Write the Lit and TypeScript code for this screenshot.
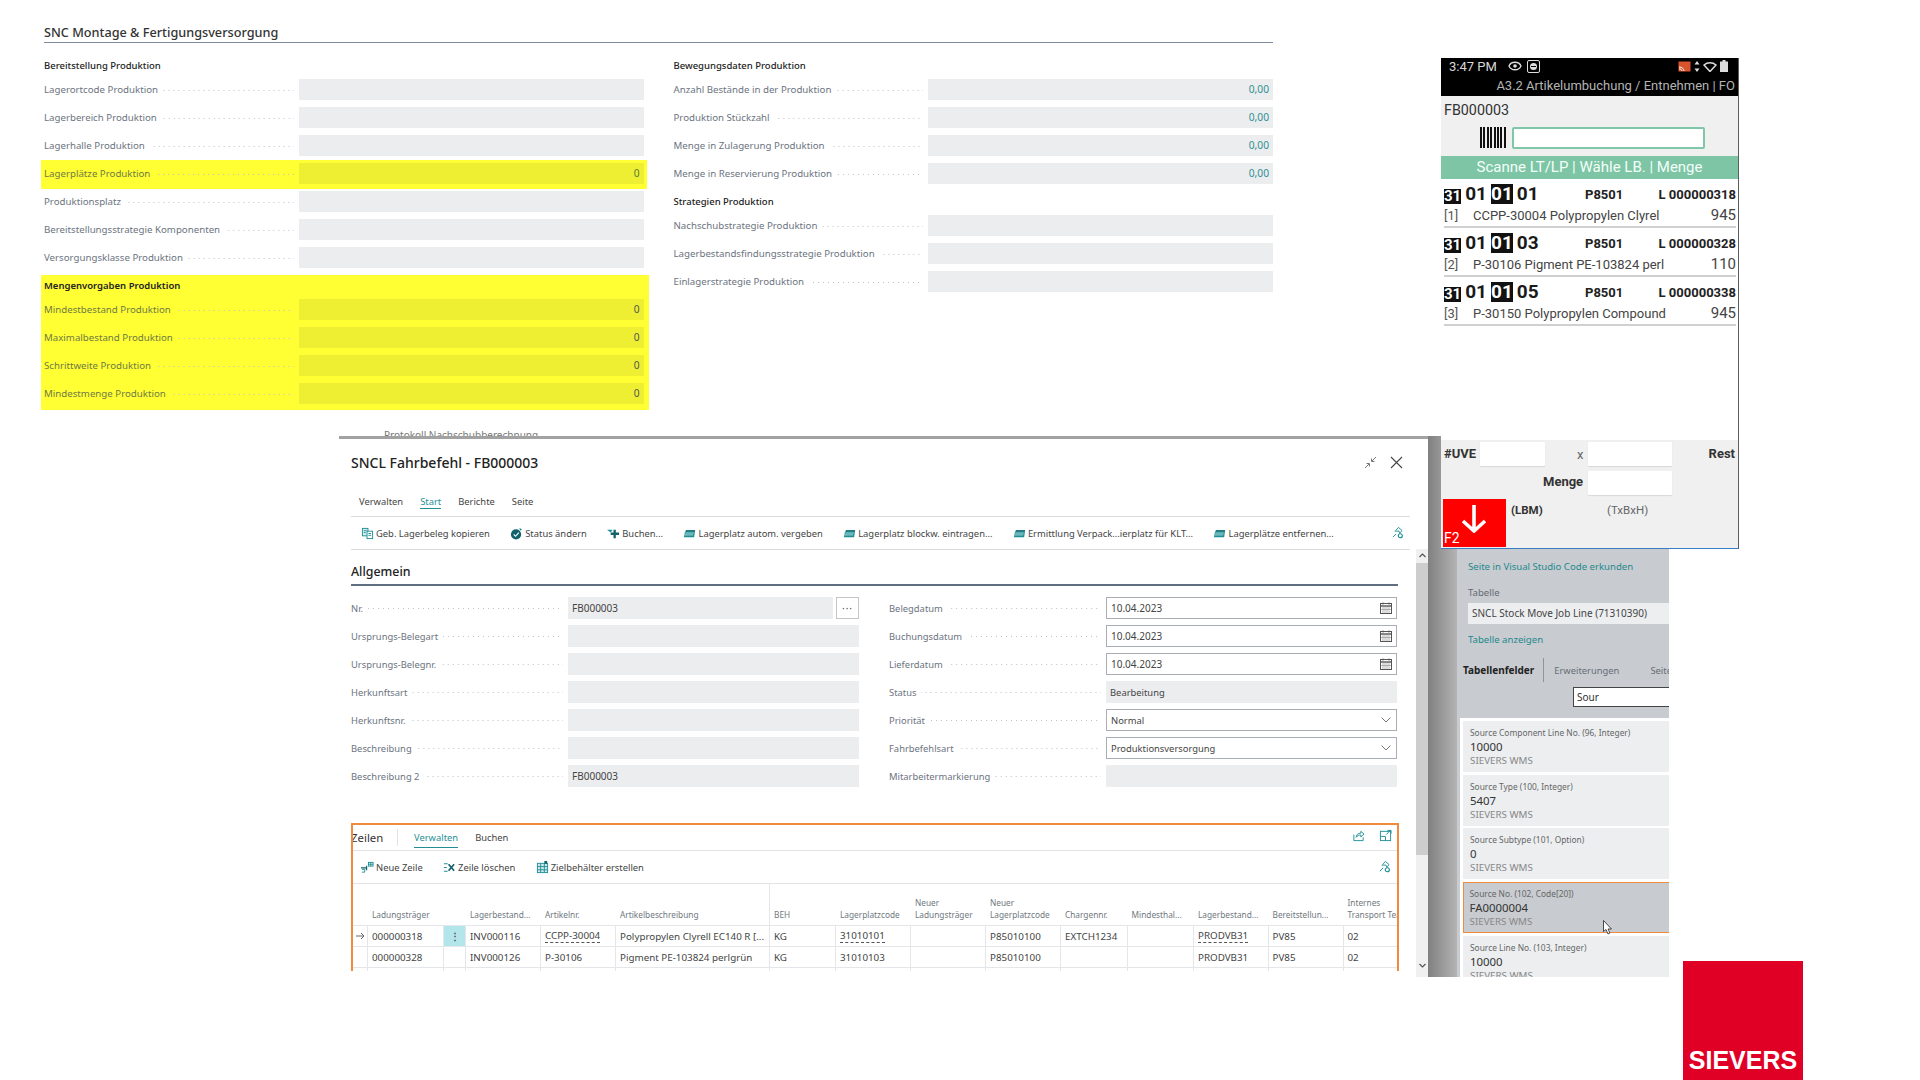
import { LitElement, css, html, svg } from "lit";
import { customElement } from "lit/decorators.js";

const TEAL = "#1f8f95";

// small icon set, all drawn on a 14x14 box
const icons = {
  copy: svg`<rect x="1.5" y="1.5" width="6" height="8" fill="#d6eef0" stroke="${TEAL}"/><rect x="6.5" y="4.5" width="6" height="8" fill="#fff" stroke="${TEAL}"/><path d="M8 7h3M8 9h3M3 4h3M3 6h2" stroke="${TEAL}"/>`,
  status: svg`<circle cx="6.5" cy="8" r="5.5" fill="#12626b"/><path d="M4 8l2 2 3.5-4" fill="none" stroke="#fff" stroke-width="1.2"/><path d="M10 1l3 1.5L11 4z" fill="${TEAL}"/>`,
  post: svg`<path d="M7 3h2.5v3H13v2.5H9.500V12H7V8.500H4V6h3z" fill="#12626b"/><path d="M0 3h6l-2 3z" fill="${TEAL}"/>`,
  bin: svg`<path d="M3 4h10l-1 7H1l1-5z" fill="#1f8f95"/><path d="M2.500 6.500h9M2 8.500h9" stroke="#d6eef0" stroke-width=".8"/><path d="M3 4h10" stroke="#12626b" stroke-width="1.2"/>`,
  pin: svg`<path d="M2 12l3.500-3.500M5 5l3-3.500 4 3.500-3 3" fill="none" stroke="${TEAL}" stroke-width="1"/><path d="M4 5.500h4.500l1 2.500" fill="none" stroke="${TEAL}"/><circle cx="10" cy="10.500" r="2.200" fill="#fff" stroke="${TEAL}" stroke-width="1.200"/>`,
  newline: svg`<path d="M1 9h3v3H1" fill="none" stroke="${TEAL}"/><path d="M0 7.500h6M6 5v5" fill="none" stroke="#12626b" stroke-width="1.300"/><rect x="8" y="1.500" width="5" height="4" fill="none" stroke="${TEAL}"/><path d="M10.500 1.500v4M8 3.500h5" stroke="${TEAL}"/>`,
  delline: svg`<path d="M1 3h4M1 7h3M1 11h4" stroke="${TEAL}" stroke-width="1.200"/><path d="M6 3.500l6 7M12 3.500l-6 7" stroke="#12626b" stroke-width="1.800"/>`,
  bincreate: svg`<rect x="1.500" y="2.500" width="11" height="10" fill="#cfeaec" stroke="${TEAL}"/><path d="M1.500 6h11M1.500 9.500h11M5 2.500v10M9 2.500v10" stroke="${TEAL}"/><path d="M9 0h3v3H9z" fill="#12626b"/>`,
  share: svg`<path d="M2 6v6.500h10V9" fill="none" stroke="${TEAL}"/><path d="M4.500 9c0-3 2-4.500 5-4.500V2.500L13 5.500 9.500 8.500V6.500c-2 0-4 .500-5 2.500z" fill="#fff" stroke="${TEAL}"/>`,
  expand: svg`<rect x="1.500" y="2.500" width="11" height="10" fill="none" stroke="${TEAL}"/><path d="M1.500 8H7v4.500M8 6l4-4.500M9 1.500h4v3.500" fill="none" stroke="${TEAL}"/>`,
};

const icon = (name: keyof typeof icons) =>
  html`<svg class="ico" viewBox="0 0 14 14">${icons[name]}</svg>`;

const calendar = html`<svg class="cal" viewBox="0 0 12 12">
  <rect x=".5" y="1.500" width="11" height="10" fill="none" stroke="#555"/>
  <path d="M.5 4h11" stroke="#555" stroke-width="1.400"/>
  <path d="M3 5v6M5 5v6M7 5v6M9 5v6M1 7.500h10" stroke="#999" stroke-width=".7"/>
  <path d="M3 .5v2M9 .5v2" stroke="#555"/>
</svg>`;

const chevron = html`<svg class="chev" viewBox="0 0 10 6">
  <path d="M.5 .5L5 5 9.500 .5" fill="none" stroke="#777"/>
</svg>`;

const rowArrow = html`<svg width="9" height="8" viewBox="0 0 9 8">
  <path d="M0 4h8M5 1l3 3-3 3" fill="none" stroke="#666"/>
</svg>`;

type Field = { label: string; value?: string; kind?: string };

const supplyFields: Field[] = [
  { label: "Lagerortcode Produktion" },
  { label: "Lagerbereich Produktion" },
  { label: "Lagerhalle Produktion" },
  { label: "Lagerplätze Produktion", value: "0", kind: "hot" },
  { label: "Produktionsplatz" },
  { label: "Bereitstellungsstrategie Komponenten" },
  { label: "Versorgungsklasse Produktion" },
];
const amountFields: Field[] = [
  { label: "Mindestbestand Produktion", value: "0" },
  { label: "Maximalbestand Produktion", value: "0" },
  { label: "Schrittweite Produktion", value: "0" },
  { label: "Mindestmenge Produktion", value: "0" },
];
const movementFields: Field[] = [
  { label: "Anzahl Bestände in der Produktion", value: "0,00" },
  { label: "Produktion Stückzahl", value: "0,00" },
  { label: "Menge in Zulagerung Produktion", value: "0,00" },
  { label: "Menge in Reservierung Produktion", value: "0,00" },
];
const strategyFields: Field[] = [
  { label: "Nachschubstrategie Produktion" },
  { label: "Lagerbestandsfindungsstrategie Produktion" },
  { label: "Einlagerstrategie Produktion" },
];

const actions: [keyof typeof icons, string][] = [
  ["copy", "Geb. Lagerbeleg kopieren"],
  ["status", "Status ändern"],
  ["post", "Buchen..."],
  ["bin", "Lagerplatz autom. vergeben"],
  ["bin", "Lagerplatz blockw. eintragen..."],
  ["bin", "Ermittlung Verpack...ierplatz für KLT..."],
  ["bin", "Lagerplätze entfernen..."],
];

const generalLeft: Field[] = [
  { label: "Nr.", value: "FB000003", kind: "lookup" },
  { label: "Ursprungs-Belegart" },
  { label: "Ursprungs-Belegnr." },
  { label: "Herkunftsart" },
  { label: "Herkunftsnr." },
  { label: "Beschreibung" },
  { label: "Beschreibung 2", value: "FB000003" },
];
const generalRight: Field[] = [
  { label: "Belegdatum", value: "10.04.2023", kind: "date" },
  { label: "Buchungsdatum", value: "10.04.2023", kind: "date" },
  { label: "Lieferdatum", value: "10.04.2023", kind: "date" },
  { label: "Status", value: "Bearbeitung" },
  { label: "Priorität", value: "Normal", kind: "select" },
  { label: "Fahrbefehlsart", value: "Produktionsversorgung", kind: "select" },
  { label: "Mitarbeitermarkierung" },
];

const columns = [
  "",
  "Ladungsträger",
  "",
  "Lagerbestand...",
  "Artikelnr.",
  "Artikelbeschreibung",
  "BEH",
  "Lagerplatzcode",
  "Neuer\nLadungsträger",
  "Neuer\nLagerplatzcode",
  "Chargennr.",
  "Mindesthal...",
  "Lagerbestand...",
  "Bereitstellun...",
  "Internes\nTransport Tea",
];
const lines = [
  ["", "000000318", "⋮", "INV000116", "CCPP-30004", "Polypropylen Clyrell EC140 R [...", "KG", "31010101", "", "P85010100", "EXTCH1234", "", "PRODVB31", "PV85", "02"],
  ["", "000000328", "", "INV000126", "P-30106", "Pigment PE-103824 perlgrün", "KG", "31010103", "", "P85010100", "", "", "PRODVB31", "PV85", "02"],
  ["", "", "", "", "", "", "", "", "", "", "", "", "", "", ""],
];
const linked = new Set(["CCPP-30004", "31010101", "PRODVB31"]);

const scans = [
  { end: "01", lot: "L 000000318", idx: "[1]", text: "CCPP-30004 Polypropylen Clyrel", qty: "945" },
  { end: "03", lot: "L 000000328", idx: "[2]", text: "P-30106 Pigment PE-103824 perl", qty: "110" },
  { end: "05", lot: "L 000000338", idx: "[3]", text: "P-30150 Polypropylen Compound", qty: "945" },
];

const inspectCards = [
  ["Source Component Line No. (96, Integer)", "10000"],
  ["Source Type (100, Integer)", "5407"],
  ["Source Subtype (101, Option)", "0"],
  ["Source No. (102, Code[20])", "FA0000004"],
  ["Source Line No. (103, Integer)", "10000"],
];

@customElement("app-root")
export class AppRoot extends LitElement {
  static styles = css`
    :host {
      display: block;
      position: relative;
      width: 1920px;
      height: 1080px;
      overflow: hidden;
      background: #fff;
      font-family: "Noto Sans", "Open Sans", sans-serif;
      font-size: 10px;
      color: #333;
    }

    /* the page is a slide: every window sits at its own place on it */
    .card-sheet { position: absolute; left: 44px; top: 22px; width: 1229px; }
    .behind { position: absolute; left: 384px; top: 431px; height: 5px; overflow: hidden; font-size: 10px; line-height: 8px; color: #777; white-space: nowrap; }
    .dialog { position: absolute; left: 339px; top: 436px; width: 1089px; height: 541px; }
    .shade { position: absolute; left: 1428px; top: 436px; width: 29px; height: 541px; background: linear-gradient(90deg, #808080, #b4b4b4); }
    .phone { position: absolute; left: 1441px; top: 58px; width: 298px; height: 491px; }
    .inspector { position: absolute; left: 1457px; top: 548px; width: 212px; height: 429px; }
    .logo { position: absolute; left: 1683px; top: 961px; width: 120px; height: 119px; }

    /* top sheet */
    .sheet-title { font-size: 12.700px; line-height: 20px; color: #333; font-weight: 500; height: 20px; border-bottom: 1.500px solid #7d8b9c; }
    .sheet-cols { display: grid; grid-template-columns: 600px 600px; column-gap: 29.500px; margin-top: 13px; }
    .sub { font-size: 9.500px; font-weight: 500; color: #222; height: 22.500px; line-height: 20px; }
    .sub.mid { height: 24px; line-height: 22px; }
    .frow { display: flex; height: 28px; align-items: flex-start; }
    .flabel { display: flex; align-items: center; height: 22px; color: #6c7480; font-size: 9.700px; white-space: nowrap; }
    .leader { flex: 1; min-width: 0; height: 1px; margin: 1px 5px 0 5px; background: linear-gradient(90deg, #bcc0c6 1px, transparent 1px) right / 5px 1px repeat-x; }
    .fbar { height: 21.500px; background: #ecedef; display: flex; align-items: center; justify-content: flex-end; padding: 0 4px; box-sizing: border-box; font-size: 10.200px; color: #444; flex: none; }

    .col-a .flabel { width: 254.500px; }
    .col-a .fbar { width: 345px; }
    .col-b .flabel { width: 254.500px; }
    .col-b .fbar { width: 345px; color: #2e8f93; }

    .hl { background: #ffff33; margin-left: -3px; padding-left: 3px; }
    .hl .fbar { background: #eeee33; color: #5c7a3a; }
    .hl .flabel { color: #6f7a45; }
    .hl-one { height: 29px; box-sizing: border-box; padding-top: 3px; margin-top: -3px; margin-bottom: 2px; margin-right: -3px; }
    .hl-block { height: 135px; margin-right: -5px; box-sizing: border-box; }
    .hl-block .sub { height: 24px; line-height: 22px; font-weight: 600; color: #222; }
    .hl-block .fbar { color: #555; }

    /* dialog */
    .dialog { background: #fff; display: flex; flex-direction: column; }
    .dialog-strip { height: 3px; background: #a2a2a2; flex: none; }
    .dialog-body { position: relative; flex: 1; padding: 0 30px 0 12px; }
    .dlg-head { display: flex; align-items: center; justify-content: space-between; height: 47px; margin-right: -5px; }
    .dlg-title { font-size: 14px; font-weight: 500; color: #222; }
    .dlg-tools { display: flex; gap: 13px; align-items: center; }
    .tabs { display: flex; height: 31px; gap: 17px; padding-left: 8px; margin-right: -12px; align-items: flex-start; border-bottom: 1px solid #dcdcdc; box-sizing: border-box; }
    .tab { font-size: 9.400px; line-height: 18px; height: 23px; color: #444; box-sizing: border-box; padding-top: 7px; }
    .tab.on { color: #1f8f95; border-bottom: 1.500px solid #1f8f95; }
    .actions { display: flex; align-items: center; height: 32px; padding-left: 10px; margin-right: -12px; border-bottom: 1px solid #dcdcdc; position: relative; }
    .action { display: flex; align-items: center; gap: 2px; margin-right: 20.400px; font-size: 9.400px; color: #444; white-space: nowrap; }
    .ico { width: 13px; height: 13px; flex: none; }
    .pin { position: absolute; right: 6px; top: 9px; }
    .fasttab { font-size: 12.400px; font-weight: 500; color: #222; height: 34px; line-height: 44px; border-bottom: 2px solid #5f6f7f; }
    .general { display: grid; grid-template-columns: 508px 508px; column-gap: 30px; margin-top: 11px; }
    .general .flabel { width: 217px; font-size: 9.400px; }
    .gbar { flex: 1; height: 22px; background: #ecedef; display: flex; align-items: center; padding: 0 4px; box-sizing: border-box; font-size: 9.400px; color: #444; }
    .gbar.digits { font-size: 10px; }
    .gbar.input { background: #fff; border: 1px solid #a9adb5; }
    .gbar.input > svg { margin-left: auto; }
    .cal { width: 12px; height: 12px; }
    .chev { width: 10px; height: 6px; margin-right: 1px; }
    .gbar.lookup { margin-right: 3px; }
    .more { width: 23px; height: 22px; border: 1px solid #c3c5c9; box-sizing: border-box; display: flex; align-items: center; justify-content: center; color: #555; font-size: 10px; letter-spacing: 1px; flex: none; }

    .parts { position: absolute; left: 12px; top: 384px; width: 1048px; height: 148px; box-sizing: border-box; border: solid #f08a3c; border-width: 2px 2px 0 2px; overflow: hidden; background: #fff; }
    .parts-head { display: flex; align-items: center; height: 25px; border-bottom: 1px solid #e2e3e6; position: relative; }
    .parts-title { font-size: 11.400px; color: #333; width: 47px; border-right: 1px solid #e2e3e6; height: 17px; line-height: 17px; margin-right: 16px; flex: none; margin-left: -2px; box-sizing: border-box; }
    .ptab { font-size: 9.400px; margin-right: 17px; color: #444; height: 20px; line-height: 18px; padding-top: 1px; box-sizing: border-box; }
    .ptab.on { color: #1f8f95; border-bottom: 1.500px solid #1f8f95; }
    .ptools { position: absolute; right: 5px; top: 4px; display: flex; gap: 14px; }
    .parts-actions { display: flex; align-items: center; height: 32px; padding-left: 8px; border-bottom: 1px solid #e2e3e6; position: relative; }
    .grid { display: grid; grid-template-columns: 15px 76px 22px 75px 75px 154px 66px 75px 75px 75px 66.500px 66.500px 74.500px 75px 56px; border-bottom: 1px solid #dcdfe3; height: 88px; grid-template-rows: 42px 21px 21px 4px; }
    .th { display: flex; align-items: flex-end; padding: 0 0 4px 4px; font-size: 8.300px; color: #707880; line-height: 12px; box-sizing: border-box; white-space: pre; overflow: hidden; border-bottom: 1px solid #e4e6ea; }
    .th.split { border-right: 1px solid #e4e6ea; }
    .td { display: flex; align-items: center; padding-left: 4px; font-size: 9.800px; color: #444; white-space: nowrap; overflow: hidden; box-sizing: border-box; border-right: 1px solid #e4e6ea; border-bottom: 1px solid #e4e6ea; }
    .td.mark { padding: 0; justify-content: center; }
    .td.menu { padding: 0; justify-content: center; font-weight: 700; color: #555; }
    .td.menu.on { background: #b3e6ea; }
    .td .link { border-bottom: 1px dashed #555; line-height: 12px; }

    .scroll { position: absolute; right: 0; top: 110px; bottom: 0; width: 12px; background: #f0f0f0; display: flex; flex-direction: column; }
    .scroll-up, .scroll-down { flex: none; display: flex; justify-content: center; padding-top: 4px; box-sizing: border-box; }
    .scroll-up { height: 14px; }
    .scroll-down { height: 24px; padding-top: 10px; }
    .thumb { height: 292px; background: #cdcdcd; flex: none; }
    .scroll .spacer { flex: 1; }

    /* phone */
    .phone { background: #fff; font-family: Roboto, "Liberation Sans", sans-serif; display: flex; flex-direction: column; border-right: 1px solid #5e5e5e; border-bottom: 1px solid #3b7dc4; box-sizing: border-box; }
    .ph-status { background: #000; height: 38px; flex: none; position: relative; color: #ddd; }
    .ph-time { position: absolute; left: 8px; top: 0; font-size: 13px; line-height: 17px; color: #d8d8d8; }
    .ph-eye { position: absolute; left: 67px; top: 3px; }
    .ph-sync { position: absolute; left: 86px; top: 2px; width: 13px; height: 13px; }
    .ph-right { position: absolute; right: 10px; top: 2px; display: flex; gap: 3px; align-items: center; }
    .ph-title { position: absolute; right: 3px; top: 19px; font-size: 13px; line-height: 17px; color: #b4b4b4; white-space: nowrap; }
    .ph-scan { background: #f0f0f0; height: 60px; flex: none; position: relative; }
    .ph-doc { position: absolute; left: 3px; top: 5px; font-size: 14.300px; line-height: 18px; color: #333; }
    .ph-bars { position: absolute; left: 39px; top: 31px; width: 27px; height: 21px; background: repeating-linear-gradient(90deg, #111 0 2px, transparent 2px 3.400px); }
    .ph-input { position: absolute; left: 71px; top: 31px; width: 193px; height: 22px; box-sizing: border-box; border: 2px solid #80c6a8; border-radius: 2px; background: #fff; }
    .ph-band { background: #7dc5a5; color: #f4fff9; height: 23px; line-height: 23px; flex: none; font-size: 15px; text-align: center; }
    .ph-list { flex: 1; padding: 0 2px 0 3px; }
    .ph-item { height: 49px; box-sizing: border-box; border-bottom: 2px solid #d0d0d0; position: relative; }
    .ph-line { position: absolute; left: 0; right: 0; top: 3px; height: 24px; display: flex; align-items: center; color: #222; }
    .bin { font-size: 19px; font-weight: 700; color: #1a1a1a; margin-right: 4px; line-height: 20px; }
    .bin.inv { background: #111; color: #fff; line-height: 20px; }
    .bin.inv.small { font-size: 15px; line-height: 15px; height: 15px; margin-top: 4px; }
    .bin.inv.big { height: 20px; }
    .zone { position: absolute; left: 141px; font-size: 13px; font-weight: 700; color: #222; }
    .lot { position: absolute; right: 0; font-size: 13px; font-weight: 700; color: #222; }
    .ph-desc { position: absolute; left: 0; right: 0; top: 27px; height: 18px; display: flex; align-items: center; color: #444; font-size: 13px; }
    .ph-idx { width: 29px; color: #555; }
    .ph-qty { margin-left: auto; font-size: 15px; color: #444; }
    .ph-foot { background: #f0f0f0; height: 108px; flex: none; position: relative; margin-top: auto; font-size: 13px; }
    .pf { position: absolute; }
    .pf-x { left: 136px; top: 7px; color: #666; }
    .pf-input { position: absolute; background: #fff; height: 24px; box-shadow: 0 1px 1px #d8d8d8; border-radius: 1px; top: 2px; }
    .pf-uve { left: 39px; width: 65px; }
    .pf-mult { left: 147px; width: 84px; }
    .pf-qty { left: 147px; width: 84px; top: 31px; }
    .pf-b { font-weight: 700; color: #333; line-height: 16px; }
    .pf-l1 { left: 3px; top: 6px; }
    .pf-l2 { right: 3px; top: 6px; }
    .pf-l3 { left: 102px; top: 34px; }
    .pf-l4 { left: 70px; top: 62px; font-size: 11.500px; }
    .pf-l5 { left: 166px; top: 62px; font-size: 11.500px; line-height: 16px; color: #666; }
    .pf-red { position: absolute; left: 2px; top: 59px; width: 63px; height: 48px; background: #f00; }
    .pf-red svg { position: absolute; left: 17px; top: 5px; }
    .pf-f2 { position: absolute; left: 1px; bottom: 1px; font-size: 14px; line-height: 16px; color: #fff; }

    /* inspector */
    .inspector { background: #c8ccd0; overflow: hidden; font-size: 10px; color: #444; }
    .insp-link { color: #23888e; position: absolute; left: 11px; white-space: nowrap; line-height: 14px; font-size: 9.600px; }
    .insp-link.one { top: 12px; }
    .insp-link.two { top: 85px; }
    .insp-cap { position: absolute; left: 11px; top: 38px; color: #656a74; line-height: 14px; font-size: 9.600px; }
    .insp-val { position: absolute; left: 11px; top: 55px; right: 0; height: 21px; background: #eceef0; padding-left: 4px; line-height: 21px; color: #444; white-space: nowrap; }
    .insp-tabs { position: absolute; left: 6px; top: 110px; right: 0; height: 24px; display: flex; align-items: center; white-space: nowrap; color: #666d76; font-size: 9.400px; }
    .insp-tabs b { color: #222; font-weight: 700; font-size: 10px; padding-right: 9px; border-right: 1px solid #8f949b; line-height: 24px; }
    .insp-tabs span { margin-left: 10px; margin-right: 21px; }
    .insp-search { position: absolute; left: 116px; top: 139px; width: 110px; height: 20px; background: #fff; border: 1px solid #444; box-sizing: border-box; padding-left: 3px; line-height: 19px; color: #333; }
    .insp-list { position: absolute; left: 3px; right: 0; top: 170px; bottom: 0; background: #fff; padding: 3px 0 0 3px; display: grid; row-gap: 2.700px; grid-auto-rows: 51px; overflow: hidden; }
    .insp-card { background: #eceef0; padding: 5px 0 0 7px; box-sizing: border-box; position: relative; white-space: nowrap; }
    .insp-card.on { background: #c8ccd0; border: solid #f08a3c; border-width: 1.500px 0 1.500px 1.500px; padding: 3.500px 0 0 5.500px; }
    .ic-t { font-size: 8.400px; line-height: 14px; color: #666; }
    .ic-v { font-size: 11.400px; line-height: 14px; color: #333; }
    .ic-s { font-size: 9.800px; line-height: 14px; color: #888; }
    .cursor { position: absolute; left: 139px; top: 37px; }

    /* logo */
    .logo { background: #e10025; color: #fff; display: flex; align-items: flex-end; justify-content: center; font-family: "Liberation Sans", Arial, sans-serif; font-weight: 700; font-size: 25px; line-height: 27px; padding-bottom: 6px; box-sizing: border-box; }
  `;

  renderField(f: Field) {
    return html`<div class="frow">
      <div class="flabel">${f.label}<i class="leader"></i></div>
      <div class="fbar">${f.value ?? ""}</div>
    </div>`;
  }

  renderGeneral(f: Field) {
    const input = f.kind === "date" || f.kind === "select";
    const digits = /\d/.test(f.value ?? "");
    return html`<div class="frow">
      <div class="flabel">${f.label}<i class="leader"></i></div>
      <div class="gbar ${input ? "input" : ""} ${digits ? "digits" : ""} ${f.kind === "lookup" ? "lookup" : ""}">
        ${f.value ?? ""}
        ${f.kind === "date" ? calendar : ""}
        ${f.kind === "select" ? chevron : ""}
      </div>
      ${f.kind === "lookup" ? html`<div class="more">···</div>` : ""}
    </div>`;
  }

  renderSheet() {
    return html`<section class="card-sheet">
      <div class="sheet-title">SNC Montage &amp; Fertigungsversorgung</div>
      <div class="sheet-cols">
        <div class="col-a">
          <div class="sub">Bereitstellung Produktion</div>
          ${supplyFields.map((f) =>
            f.kind === "hot"
              ? html`<div class="hl hl-one">${this.renderField(f)}</div>`
              : this.renderField(f)
          )}
          <div class="hl hl-block">
            <div class="sub">Mengenvorgaben Produktion</div>
            ${amountFields.map((f) => this.renderField(f))}
          </div>
        </div>
        <div class="col-b">
          <div class="sub">Bewegungsdaten Produktion</div>
          ${movementFields.map((f) => this.renderField(f))}
          <div class="sub mid">Strategien Produktion</div>
          ${strategyFields.map((f) => this.renderField(f))}
        </div>
      </div>
    </section>`;
  }

  renderDialog() {
    return html`<section class="dialog">
      <div class="dialog-strip"></div>
      <div class="dialog-body">
        <div class="dlg-head">
          <div class="dlg-title">SNCL Fahrbefehl - FB000003</div>
          <div class="dlg-tools">
            <svg width="13" height="13" viewBox="0 0 13 13"><path d="M1 12l4-4M2.500 7.500H5.500V10.500M12 1L8 5M10.500 5.500H7.500V2.500" fill="none" stroke="#777"/></svg>
            <svg width="13" height="13" viewBox="0 0 13 13"><path d="M1 1l11 11M12 1L1 12" fill="none" stroke="#444" stroke-width="1.100"/></svg>
          </div>
        </div>
        <div class="tabs">
          <div class="tab">Verwalten</div>
          <div class="tab on">Start</div>
          <div class="tab">Berichte</div>
          <div class="tab">Seite</div>
        </div>
        <div class="actions">
          ${actions.map(([i, t]) => html`<div class="action">${icon(i)}${t}</div>`)}
          <span class="pin">${icon("pin")}</span>
        </div>
        <div class="fasttab">Allgemein</div>
        <div class="general">
          <div>${generalLeft.map((f) => this.renderGeneral(f))}</div>
          <div>${generalRight.map((f) => this.renderGeneral(f))}</div>
        </div>
        <div class="parts">
          <div class="parts-head">
            <div class="parts-title">Zeilen</div>
            <div class="ptab on">Verwalten</div>
            <div class="ptab">Buchen</div>
            <div class="ptools">${icon("share")}${icon("expand")}</div>
          </div>
          <div class="parts-actions">
            <div class="action">${icon("newline")}Neue Zeile</div>
            <div class="action">${icon("delline")}Zeile löschen</div>
            <div class="action">${icon("bincreate")}Zielbehälter erstellen</div>
            <span class="pin">${icon("pin")}</span>
          </div>
          <div class="grid">
            ${columns.map((c, i) => html`<div class="th ${i === 5 ? "split" : ""}">${c}</div>`)}
            ${lines.map((row, r) =>
              row.map((cell, c) => {
                if (c === 0) return html`<div class="td mark">${r === 0 ? rowArrow : ""}</div>`;
                if (c === 2) return html`<div class="td menu ${r === 0 ? "on" : ""}">${cell}</div>`;
                if (r === 0 && linked.has(cell)) {
                  return html`<div class="td"><span class="link">${cell}</span></div>`;
                }
                return html`<div class="td">${cell}</div>`;
              })
            )}
          </div>
        </div>
        <div class="scroll">
          <div class="scroll-up"><svg width="7" height="5" viewBox="0 0 7 5"><path d="M.5 4L3.500 1l3 3" fill="none" stroke="#555" stroke-width="1.200"/></svg></div>
          <div class="thumb"></div>
          <div class="spacer"></div>
          <div class="scroll-down"><svg width="7" height="5" viewBox="0 0 7 5"><path d="M.5 1l3 3 3-3" fill="none" stroke="#555" stroke-width="1.200"/></svg></div>
        </div>
      </div>
    </section>`;
  }

  renderPhone() {
    return html`<section class="phone">
      <div class="ph-status">
        <span class="ph-time">3:47 PM</span>
        <svg class="ph-eye" width="14" height="10" viewBox="0 0 14 10"><path d="M1 5c2-5 10-5 12 0-2 5-10 5-12 0z" fill="none" stroke="#ddd" stroke-width="1.300"/><circle cx="7" cy="5" r="1.800" fill="#ddd"/></svg>
        <svg class="ph-sync" viewBox="0 0 13 13"><rect x=".5" y=".5" width="12" height="12" rx="1.500" fill="none" stroke="#ddd"/><circle cx="6.500" cy="6.500" r="3.500" fill="#ddd"/><path d="M4 6.500h5" stroke="#000"/></svg>
        <div class="ph-right">
          <svg width="13" height="11" viewBox="0 0 13 11"><rect x=".5" y=".5" width="12" height="10" fill="#d9532c"/><path d="M1 6c3 0 5 2 5 4M1 8c2 0 3 1 3 2" fill="none" stroke="#fff"/></svg>
          <svg width="6" height="11" viewBox="0 0 6 11"><path d="M3 0l2.500 3.500h-5zM3 11L.5 7.500h5z" fill="#ddd"/></svg>
          <svg width="14" height="11" viewBox="0 0 14 11"><path d="M1 4a9 9 0 0 1 12 0L7 10.500z" fill="none" stroke="#ddd" stroke-width="1.500"/></svg>
          <svg width="8" height="12" viewBox="0 0 8 12"><rect x="0" y="1.500" width="8" height="10.500" fill="#ddd"/><rect x="2.500" y="0" width="3" height="2" fill="#ddd"/></svg>
        </div>
        <span class="ph-title">A3.2 Artikelumbuchung / Entnehmen | FO</span>
      </div>
      <div class="ph-scan">
        <span class="ph-doc">FB000003</span>
        <i class="ph-bars"></i>
        <i class="ph-input"></i>
      </div>
      <div class="ph-band">Scanne LT/LP | Wähle LB. | Menge</div>
      <div class="ph-list">
        ${scans.map(
          (s) => html`<div class="ph-item">
            <div class="ph-line">
              <span class="bin inv small">31</span><span class="bin">01</span><span class="bin inv big">01</span><span class="bin">${s.end}</span>
              <span class="zone">P8501</span>
              <span class="lot">${s.lot}</span>
            </div>
            <div class="ph-desc"><span class="ph-idx">${s.idx}</span>${s.text}<span class="ph-qty">${s.qty}</span></div>
          </div>`
        )}
      </div>
      <div class="ph-foot">
        <span class="pf pf-b pf-l1">#UVE</span>
        <i class="pf-input pf-uve"></i>
        <span class="pf pf-x">x</span>
        <i class="pf-input pf-mult"></i>
        <span class="pf pf-b pf-l2">Rest</span>
        <span class="pf pf-b pf-l3">Menge</span>
        <i class="pf-input pf-qty"></i>
        <div class="pf-red">
          <svg width="28" height="29" viewBox="0 0 28 29"><path d="M14 1v26M3 17l11 10 11-10" fill="none" stroke="#fff" stroke-width="3.600"/></svg>
          <span class="pf-f2">F2</span>
        </div>
        <span class="pf pf-b pf-l4">(LBM)</span>
        <span class="pf pf-l5">(TxBxH)</span>
      </div>
    </section>`;
  }

  renderInspector() {
    return html`<section class="inspector">
      <span class="insp-link one">Seite in Visual Studio Code erkunden</span>
      <span class="insp-cap">Tabelle</span>
      <div class="insp-val">SNCL Stock Move Job Line (71310390)</div>
      <span class="insp-link two">Tabelle anzeigen</span>
      <div class="insp-tabs"><b>Tabellenfelder</b><span>Erweiterungen</span><span>Seiten</span></div>
      <div class="insp-search">Sour</div>
      <div class="insp-list">
        ${inspectCards.map(
          ([t, v], i) => html`<div class="insp-card ${i === 3 ? "on" : ""}">
            <div class="ic-t">${t}</div>
            <div class="ic-v">${v}</div>
            <div class="ic-s">SIEVERS WMS</div>
            ${i === 3
              ? html`<svg class="cursor" width="10" height="15" viewBox="0 0 10 15"><path d="M.5 .5v11l2.500-2 2 4.500 2-1-2-4h3.500z" fill="#fff" stroke="#222" stroke-width=".8"/></svg>`
              : ""}
          </div>`
        )}
      </div>
    </section>`;
  }

  render() {
    return html`
      ${this.renderSheet()}
      <div class="behind">Protokoll Nachschubberechnung</div>
      ${this.renderDialog()}
      <div class="shade"></div>
      ${this.renderInspector()} ${this.renderPhone()}
      <div class="logo">SIEVERS</div>
    `;
  }
}
